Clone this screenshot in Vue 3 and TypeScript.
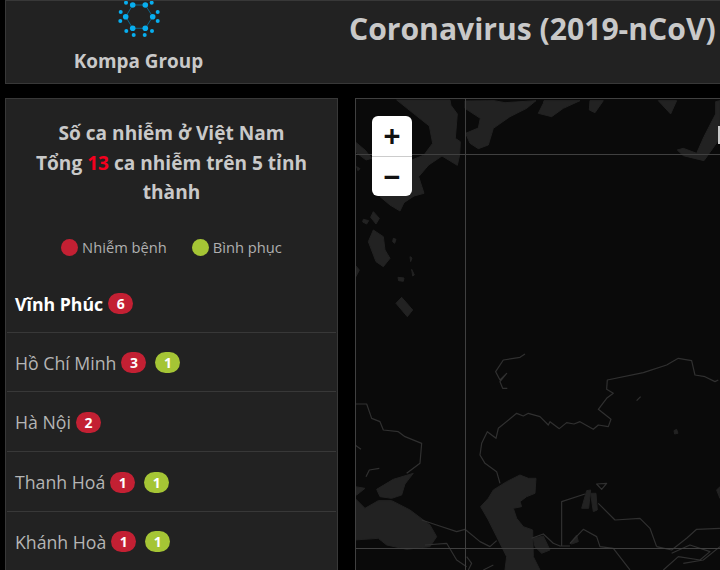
<script setup lang="ts">
interface Province {
  name: string
  sick: number
  healed?: number
  active?: boolean
}

const provinces: Province[] = [
  { name: 'Vĩnh Phúc', sick: 6, active: true },
  { name: 'Hồ Chí Minh', sick: 3, healed: 1 },
  { name: 'Hà Nội', sick: 2 },
  { name: 'Thanh Hoá', sick: 1, healed: 1 },
  { name: 'Khánh Hoà', sick: 1, healed: 1 },
]

const hubs = [
  [131.7, 4], [144.3, 4], [151.7, 15.7], [144.3, 27.3], [131.7, 27.3], [124.7, 15.7],
]
const leaves = [
  [119.7, 11], [119.3, 20], [125, 1.7], [150.7, 1.7], [156.7, 11], [156.7, 20],
  [151, 30], [143.7, 34], [132.7, 34], [125.3, 30],
]
</script>

<template>
  <div class="page">
    <header class="top card">
      <div class="brand">
        <svg class="logo" width="50" height="36" viewBox="113 0 50 36">
          <polygon points="131.7,4 144.3,4 151.7,15.7 144.3,27.3 131.7,27.3 124.7,15.7" fill="none" stroke="#0e6386" stroke-width="1" />
          <g fill="#08aeef">
            <circle v-for="(p, i) in hubs" :key="'h' + i" :cx="p[0]" :cy="p[1]" r="2.8" />
            <circle v-for="(p, i) in leaves" :key="'l' + i" :cx="p[0]" :cy="p[1]" r="2" />
          </g>
        </svg>
        <div class="brand-name">Kompa Group</div>
      </div>
      <h1 class="title">Coronavirus (2019-nCoV)</h1>
    </header>

    <main class="content">
      <aside class="side card">
        <h2 class="side-title">
          Số ca nhiễm ở Việt Nam<br />
          Tổng <span class="hot">13</span> ca nhiễm trên 5 tỉnh thành
        </h2>
        <div class="legend">
          <span class="legend-item"><i class="dot red"></i>Nhiễm bệnh</span>
          <span class="legend-item"><i class="dot green"></i>Bình phục</span>
        </div>
        <ul class="list">
          <li v-for="p in provinces" :key="p.name" class="row" :class="{ active: p.active }">
            <span class="name">{{ p.name }}</span>
            <span class="badge red">{{ p.sick }}</span>
            <span v-if="p.healed" class="badge green">{{ p.healed }}</span>
          </li>
        </ul>
      </aside>

      <section class="map">
        <svg class="map-canvas" width="365" height="472" viewBox="355 98 365 472">
          <g class="soft" transform="translate(350 90) scale(0.3333)" fill="#222" stroke="#222" stroke-width="3" stroke-linejoin="round">
            <path d="M140 30 L300 30 L303 46 L322 72 L316 145 L331 155 L329 195 L322 226 L276 198 L236 225 L206 260 L222 310 L192 318 L162 338 L150 363 L120 345 L90 320 L150 225 L222 195 L248 160 L238 108 L190 70 Z" />
            <path d="M345 33 L432 32 L465 38 L558 32 L530 55 L480 80 L430 115 L415 165 L385 176 L360 160 L347 130 L385 114 L391 85 L345 55 Z" />
            <path d="M582 32 L690 32 L640 55 L605 80 L565 70 L580 40 Z" />
            <path d="M720 32 L760 32 L735 68 L718 60 Z" />
            <path d="M925 32 L980 32 L962 72 Z" />
            <path d="M1097 35 L1110 32 L1110 145 L1062 212 L1000 197 L982 180 L1000 175 L1040 190 L1062 140 L1097 72 Z" />
            <path d="M15 155 L45 180 L65 205 L48 210 L15 185 Z" />
            <path d="M70 365 L88 385 L78 402 L62 382 Z" />
            <path d="M40 388 L56 392 L50 402 L38 396 Z" />
            <path d="M70 420 L100 440 L105 480 L120 505 L100 530 L78 515 L55 455 Z" />
            <path d="M130 445 L138 448 L134 460 L128 455 Z" />
            <path d="M180 500 L186 504 L182 515 Z" />
            <path d="M185 538 L193 555 L188 558 Z" />
            <path d="M144 562 L162 564 L160 574 L146 572 Z" />
            <path d="M155 622 L188 660 L172 680 L138 640 Z" />
            <path d="M15 525 L28 540 L18 560 L15 560 Z" />
            <path d="M20 230 L30 236 L24 242 Z" />
          </g>
          <g class="soft" transform="translate(350 330) scale(0.3333)">
            <g fill="#222" stroke="#222" stroke-width="3" stroke-linejoin="round">
              <path d="M15 470 L45 475 L20 495 L15 495 Z" />
              <path d="M80 478 L130 448 L190 430 L165 462 L155 495 L125 505 L90 500 Z" />
              <path d="M15 505 L45 535 L85 512 L125 512 L180 540 L240 585 L260 620 L240 650 L170 658 L110 645 L85 625 L15 630 Z" />
              <path d="M392 530 L415 505 L430 480 L470 455 L510 435 L535 445 L558 445 L555 490 L530 500 L510 515 L515 530 L490 535 L500 565 L520 590 L548 600 L550 680 L570 720 L465 720 L470 680 L440 620 L415 570 Z" />
              <path d="M550 625 L580 618 L600 660 L575 670 L555 650 Z" />
              <path d="M695 535 L710 482 L722 480 L716 535 Z" />
              <path d="M722 490 L738 490 L742 540 L730 545 Z" />
              <path d="M660 640 L680 615 L685 635 L665 642 Z" />
              <path d="M1100 480 L1110 470 L1110 505 Z" />
              <path d="M972 302 L980 298 L984 310 L974 312 Z" />
            </g>
            <g fill="none" stroke="#303030" stroke-width="3.6" stroke-linejoin="round">
              <path d="M15 222 L50 222 L65 265 L90 275 L100 300 L145 305 L165 320 L215 340 L210 400 L170 430" />
              <path d="M48 440 L58 420 L88 415" />
              <path d="M15 345 L33 358" />
              <path d="M525 72 L510 82 L460 90 L437 125 L450 150 L470 130 L450 155 L458 175 L472 175" />
              <path d="M450 460 L440 425 L405 400 L390 375 L395 340 L412 305 L438 325 L445 295 L500 250 L520 258 L535 250 L570 260 L595 285 L600 275 L628 296 L650 278 L672 282 L690 275 L730 298 L745 285 L775 290 L783 268 L745 238 L770 205 L790 190 L770 178 L772 150 L880 128 L950 105 L985 85 L1025 92 L1035 135 L1065 140 L1095 155 L1105 150" />
              <path d="M860 212 L872 200" />
              <path d="M215 570 L260 585 L320 605 L345 598 L390 635 L420 650 L440 632" />
              <path d="M225 645 L290 640 L320 690 L350 710" />
              <path d="M635 648 L635 515 L705 492" />
              <path d="M745 520 L795 570 L870 565 L900 595 L920 650" />
              <path d="M545 625 L580 612 L610 640 L630 648 L660 648" />
              <path d="M660 640 L700 598 L740 620 L750 650 L790 655 L840 720" />
              <path d="M920 650 L965 660 L1010 625 L1040 598 L1110 595" />
              <path d="M965 670 L1020 645 L1080 665 L1050 690 L985 680 L940 720" />
              <path d="M1000 700 L1060 690 L1110 650" />
              <path d="M740 462 L770 460 L755 478 Z" />
              <path d="M350 680 L365 700 L355 720" />
              <path d="M400 720 L430 705" />
            </g>
          </g>
          <g stroke="#404040" stroke-width="1">
            <line x1="355" y1="154.5" x2="720" y2="154.5" />
            <line x1="355" y1="548.5" x2="720" y2="548.5" />
            <line x1="465.5" y1="98" x2="465.5" y2="570" />
          </g>
        </svg>
        <div class="zoom">
          <button class="zoom-btn" type="button">+</button>
          <button class="zoom-btn" type="button">−</button>
        </div>
        <div class="edge-tag"></div>
      </section>
    </main>
  </div>
</template>

<style>
html,
body {
  margin: 0;
  background: #000;
  overflow: hidden;
}
</style>

<style scoped>
.page {
  width: 740px;
  height: 570px;
  box-sizing: border-box;
  padding-left: 5px;
  background: #000;
  overflow: hidden;
  font-family: "Open Sans", "Noto Sans", sans-serif;
  color: #c8c8c8;
}
.card {
  background: #222;
  border: 1px solid #383838;
  box-sizing: border-box;
}
.top {
  height: 84px;
  display: flex;
  overflow: hidden;
}
.brand {
  width: 265px;
  display: flex;
  flex-direction: column;
  align-items: center;
}
.logo {
  display: block;
}
.brand-name {
  margin-top: 12px;
  font-size: 18.9px;
  line-height: 24px;
  font-weight: 700;
  color: #c9c9c9;
}
.title {
  margin: 9px 0 0 78px;
  font-size: 30.1px;
  line-height: 38px;
  font-weight: 700;
  white-space: nowrap;
  color: #c9c9c9;
}
.content {
  display: grid;
  grid-template-columns: 333px 1fr;
  column-gap: 17px;
  margin-top: 14px;
}
.side {
  height: 500px;
  padding: 20px 1px 0;
  overflow: hidden;
}
.side-title {
  margin: 0;
  padding: 0 20px;
  text-align: center;
  font-size: 19.1px;
  line-height: 29.7px;
  font-weight: 700;
  color: #c9c9c9;
}
.hot {
  color: #f5001e;
}
.legend {
  height: 65px;
  box-sizing: border-box;
  padding-top: 28px;
  display: flex;
  justify-content: center;
  gap: 25px;
  font-size: 14.7px;
  line-height: 22px;
  color: #b0b0b0;
}
.legend-item {
  display: flex;
  align-items: center;
  gap: 4px;
  height: 22px;
}
.dot {
  width: 17px;
  height: 17px;
  border-radius: 50%;
}
.red {
  background: #c32033;
}
.green {
  background: #a5c535;
}
.list {
  list-style: none;
  margin: 0;
  padding: 0;
}
.row {
  height: 59.7px;
  box-sizing: border-box;
  padding: 1px 8px 0;
  display: flex;
  align-items: center;
  border-bottom: 1px solid #383838;
  font-size: 17.7px;
  color: #b5b5b5;
}
.row.active {
  padding-top: 3px;
  color: #fff;
  font-weight: 700;
}
.name {
  margin-right: 5px;
}
.badge {
  width: 25px;
  height: 21px;
  border-radius: 11px;
  display: flex;
  align-items: center;
  justify-content: center;
  color: #fff;
  font-size: 14px;
  font-weight: 700;
}
.badge + .badge {
  margin-left: 9px;
}
.map {
  position: relative;
  height: 472px;
  background: #0a0a0a;
  overflow: hidden;
  border-top: 1px solid #404040;
  border-left: 1px solid #404040;
  box-sizing: border-box;
}
.map-canvas {
  position: absolute;
  left: -1px;
  top: -1px;
  display: block;
}
.soft {
  filter: blur(0.8px);
}
.zoom {
  position: absolute;
  left: 16px;
  top: 17px;
  width: 40px;
  height: 80px;
  background: #fff;
  border-radius: 6px;
  overflow: hidden;
}
.zoom-btn {
  display: block;
  width: 40px;
  height: 40px;
  padding: 0;
  border: 0;
  background: transparent;
  font-family: "Liberation Sans", sans-serif;
  font-size: 29px;
  font-weight: 700;
  line-height: 38px;
  color: #111;
}
.zoom-btn + .zoom-btn {
  border-top: 1px solid #ccc;
}
.edge-tag {
  position: absolute;
  left: 362px;
  top: 27px;
  width: 4px;
  height: 18px;
  background: #c9c9c9;
}
</style>
